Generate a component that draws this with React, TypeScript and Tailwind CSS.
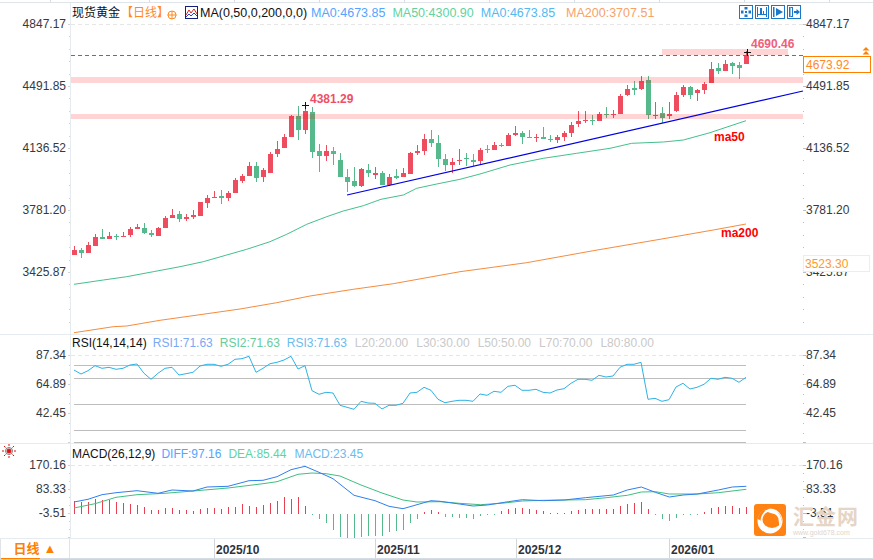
const FONT = "font-['Liberation_Sans','Noto_Sans_CJK_SC',sans-serif]";

const UP = "#ee4d5f";
const DOWN = "#55b98c";

type Candle = [number, number, number, number, number]; // up=1, wickTop, bodyTop, bodyBottom, wickBottom

// values read off the chart in 3x px, base is added afterwards
const group1: Candle[] = [
  [1, 468, 480, 495, 495], [0, 475, 481, 488, 503], [1, 457, 465, 489, 489], [1, 433, 441, 468, 468],
  [0, 418, 441, 446, 446], [1, 427, 437, 446, 447], [0, 433, 437, 439, 449], [1, 427, 438, 440, 441],
  [1, 412, 418, 435, 441], [1, 403, 411, 416, 417], [0, 400, 414, 429, 432], [0, 421, 430, 434, 440],
  [1, 411, 414, 438, 438], [1, 378, 384, 414, 414], [1, 357, 375, 384, 384], [0, 364, 373, 387, 395],
  [1, 372, 381, 386, 393], [1, 361, 375, 381, 386], [1, 335, 336, 378, 378], [1, 316, 324, 339, 354],
  [1, 303, 321, 324, 324], [0, 300, 318, 324, 342], [1, 303, 309, 324, 333], [1, 265, 270, 309, 309],
  [1, 252, 258, 273, 279], [1, 216, 228, 258, 258], [0, 216, 228, 264, 276], [1, 234, 240, 261, 276],
  [1, 186, 192, 249, 249], [1, 153, 177, 192, 201], [1, 132, 141, 174, 174], [1, 75, 78, 141, 141],
  [0, 48, 78, 120, 150], [1, 48, 63, 120, 132], [0, 51, 66, 186, 204], [0, 162, 183, 198, 246],
  [1, 165, 183, 198, 213], [0, 171, 183, 192, 225], [0, 189, 210, 261, 261], [0, 237, 261, 276, 306],
  [0, 231, 273, 288, 291],
];
const group2: Candle[] = [
  [1, 295, 297, 348, 350], [0, 282, 300, 309, 320], [1, 292, 309, 315, 327], [0, 303, 309, 345, 345],
  [1, 312, 321, 345, 348], [0, 297, 318, 324, 327], [1, 295, 309, 321, 321], [1, 246, 249, 312, 312],
  [1, 225, 243, 249, 255], [1, 192, 207, 243, 255], [0, 180, 207, 219, 231], [0, 195, 219, 267, 291],
  [0, 252, 267, 285, 303], [1, 265, 276, 285, 309], [1, 237, 270, 273, 285], [0, 250, 265, 268, 288],
  [0, 252, 270, 275, 288], [1, 234, 240, 273, 285], [0, 225, 238, 241, 248], [1, 216, 225, 240, 240],
  [0, 219, 224, 227, 231], [1, 189, 195, 228, 228], [1, 168, 189, 195, 198], [0, 183, 189, 201, 222],
  [0, 180, 201, 203, 204], [1, 192, 201, 204, 215], [0, 171, 201, 207, 207], [0, 195, 207, 210, 216],
  [1, 195, 201, 210, 219], [1, 183, 189, 201, 213], [1, 156, 165, 189, 201], [1, 123, 153, 162, 171],
  [1, 123, 150, 153, 159], [0, 135, 150, 153, 165], [1, 126, 132, 153, 153], [0, 111, 132, 135, 144],
  [1, 120, 132, 134, 144], [1, 72, 78, 132, 132], [1, 45, 57, 75, 78],
];
const group3: Candle[] = [
  [0, 124, 145, 149, 165], [1, 108, 123, 148, 151], [0, 108, 120, 225, 236], [1, 186, 224, 228, 236],
  [0, 200, 219, 234, 250], [1, 186, 222, 228, 236], [1, 156, 165, 213, 216], [1, 135, 141, 165, 171],
  [0, 138, 141, 165, 177], [1, 147, 150, 159, 183], [1, 126, 132, 150, 162], [1, 66, 87, 129, 129],
  [0, 69, 84, 93, 102], [1, 60, 72, 93, 93], [0, 66, 69, 78, 102], [0, 66, 75, 84, 117], [1, 33, 45, 72, 72],
];
const candles: Candle[] = [
  ...group1.map((c) => [c[0], c[1] / 3 + 90, c[2] / 3 + 90, c[3] / 3 + 90, c[4] / 3 + 90] as Candle),
  ...group2.map((c) => [c[0], c[1] / 3 + 70, c[2] / 3 + 70, c[3] / 3 + 70, c[4] / 3 + 70] as Candle),
  ...group3.map((c) => [c[0], c[1] / 3 + 40, c[2] / 3 + 40, c[3] / 3 + 40, c[4] / 3 + 40] as Candle),
];

const pts = (list: number[][], ox: number, oy: number) =>
  list.map(([x, y]) => `${(ox + x / 3).toFixed(1)},${(oy + y / 3).toFixed(1)}`).join(" ");

const ma50 = [
  pts([[42, 253], [130, 240], [200, 230], [280, 215], [360, 200], [430, 185], [500, 165], [560, 148], [630, 125], [680, 103], [740, 73], [800, 50], [850, 33], [910, 17]], 60, 200),
  pts([[153, 388], [220, 375], [260, 355], [320, 342]], 330, 70),
  pts([[0, 178], [60, 162], [150, 135], [250, 115], [350, 100], [450, 85], [515, 70], [610, 66], [670, 60], [750, 38], [810, 18], [858, 2]], 460, 120),
].join(" ");

const ma200 = [
  pts([[42, 398], [160, 380], [200, 378], [300, 361], [420, 344], [540, 327], [650, 308], [750, 288], [880, 268], [1000, 251]], 60, 200),
  pts([[0, 455], [200, 428], [400, 392], [600, 358], [760, 330], [858, 312]], 460, 120),
].join(" ");

const rsiValues = [
  120, 132, 122, 107, 115, 112, 118, 115, 105, 102, 130, 148, 130, 115, 112, 135, 131, 127, 108, 103, 103, 109, 103, 88, 86, 79,
  127, 115, 101, 97, 90, 79, 117, 107, 182, 193, 187, 189, 226, 232, 238, 214, 219, 220, 237, 226, 226, 220, 189, 187, 172, 181, 208,
  218, 214, 211, 211, 214, 192, 196, 184, 187, 169, 166, 181, 181, 178, 187, 189, 180, 176, 160, 148, 148, 151, 136, 141, 138, 112,
  103, 103, 97, 208, 205, 214, 209, 171, 160, 177, 172, 163, 145, 148, 142, 145, 157, 142,
];
const rsiLine = rsiValues.map((v, i) => `${74 + i * 7},${(330 + v / 3).toFixed(1)}`).join(" ");

const diffLine = [
  pts([[222, 516], [264, 508], [306, 494], [348, 488], [411, 482], [474, 490], [516, 480], [579, 483], [621, 471], [684, 469], [747, 452], [789, 451], [831, 440], [873, 419], [915, 409], [957, 427], [999, 446], [1062, 496], [1125, 512], [1167, 529], [1209, 536], [1251, 524], [1293, 512]], 0, 330),
  pts([[0, 514], [58, 522], [100, 528], [142, 525], [205, 515], [247, 509], [310, 512], [373, 510], [436, 503], [520, 495], [562, 480], [604, 471], [646, 487], [688, 501], [730, 495], [772, 492], [835, 480], [877, 471], [919, 469]], 440, 330),
].join(" ");

const deaLine = [
  pts([[222, 534], [285, 521], [348, 502], [411, 494], [495, 490], [579, 483], [684, 474], [789, 461], [831, 455], [894, 433], [936, 429], [978, 431], [1020, 438], [1083, 465], [1146, 489], [1209, 510], [1251, 516]], 0, 330),
  pts([[0, 515], [58, 520], [121, 524], [184, 520], [247, 513], [310, 511], [436, 509], [499, 503], [562, 496], [604, 486], [646, 485], [688, 492], [772, 492], [835, 488], [919, 478]], 440, 330),
].join(" ");

const macdBars = [
  513, 515, 517, 507, 510, 511, 515, 519, 523, 525, 531, 540, 539, 535, 533, 540, 541, 544, 538, 534, 534, 536, 532, 530, 522, 528, 530, 524, 519, 513, 501, 506, 501, 527,
  554, 567, 579, 600, 621, 624, 624, 622, 617, 618, 617, 607, 604, 600, 578, 567, 547, 541, 546,
  560, 560, 564, 564, 566, 558, 555, 552, 544, 536, 533, 534, 538, 540, 544, 549, 549, 549, 543, 539, 538, 537, 538, 538, 537, 527, 521, 519, 516, 536,
  555, 568, 572, 564, 555, 553, 552, 547, 533, 530, 529, 529, 533, 531,
];

function AxisTicks({ top, bottom, step, first, every }: { top: number; bottom: number; step: number; first: number; every: number }) {
  const ys: number[] = [];
  for (let y = first; y < bottom; y += step) ys.push(y);
  return (
    <g shapeRendering="crispEdges">
      <rect x={70} y={top} width={1} height={bottom - top} fill="#e6ebf0" />
      {ys.map((y, i) => {
        const major = i % every === 0;
        return (
          <g key={y}>
            <rect x={major ? 67 : 69} y={Math.round(y)} width={major ? 3 : 1} height={1} fill="#ccd4dc" />
            <rect x={803} y={Math.round(y)} width={major ? 3 : 1} height={1} fill="#b9c0c7" />
          </g>
        );
      })}
    </g>
  );
}

function MainChart() {
  return (
    <svg viewBox="68 3 738 331" className="absolute inset-0 h-full w-full">
      <AxisTicks top={3} bottom={334} step={12.4} first={24} every={5} />
      <line x1={71} y1={24.5} x2={803} y2={24.5} stroke="#e6e6e6" strokeDasharray="4 3" />
      <polyline points={ma200} fill="none" stroke="#f58c3e" strokeWidth={1} />
      <polyline points={ma50} fill="none" stroke="#45c08c" strokeWidth={1} />
      <g shapeRendering="crispEdges">
        {candles.map((c, i) => (
          <g key={i} fill={c[0] ? UP : DOWN}>
            <rect x={74 + i * 7} y={c[1]} width={1} height={c[4] - c[1]} />
            <rect x={72 + i * 7} y={c[2]} width={5} height={Math.max(c[3] - c[2], 1)} />
          </g>
        ))}
      </g>
      <g fill="#ff0000" fillOpacity={0.17} shapeRendering="crispEdges">
        <rect x={71} y={77} width={732} height={6} />
        <rect x={71} y={114} width={732} height={5} />
        <rect x={662} y={49} width={126} height={6} />
      </g>
      <line x1={71} y1={55.5} x2={803} y2={55.5} stroke="#1e82e6" strokeDasharray="4 3" />
      <line x1={347} y1={195} x2={803} y2={91} stroke="#0000e0" strokeWidth={1.2} />
      <g stroke="#111" shapeRendering="crispEdges">
        <path d="M302 105.5h7M305.5 102v7" />
        <path d="M744 52.5h7M747.5 49v7" />
      </g>
    </svg>
  );
}

function RsiChart() {
  return (
    <svg viewBox="68 335 738 108" className="absolute inset-0 h-full w-full">
      <AxisTicks top={335} bottom={443} step={9.7} first={355} every={3} />
      <line x1={71} y1={355.5} x2={803} y2={355.5} stroke="#e6e6e6" strokeDasharray="4 3" />
      <g fill="#bdbdbd" shapeRendering="crispEdges">
        <rect x={74} y={365} width={672} height={1} />
        <rect x={74} y={378} width={672} height={1} />
        <rect x={74} y={404} width={672} height={1} />
        <rect x={74} y={430} width={672} height={1} />
        <rect x={74} y={442} width={672} height={1} />
      </g>
      <polyline points={rsiLine} fill="none" stroke="#2cb3e6" strokeWidth={1} />
    </svg>
  );
}

function MacdChart() {
  return (
    <svg viewBox="68 444 738 94" className="absolute inset-0 h-full w-full">
      <AxisTicks top={444} bottom={538} step={8} first={465} every={3} />
      <line x1={71} y1={465.5} x2={803} y2={465.5} stroke="#e6e6e6" strokeDasharray="4 3" />
      <g shapeRendering="crispEdges">
        {macdBars.map((v, i) => {
          const up = v < 551;
          const y = 330 + v / 3;
          return <rect key={i} x={74 + i * 7} y={up ? y : 514} width={1} height={Math.max(Math.abs(y - 514), 1)} fill={up ? "#e8404f" : DOWN} />;
        })}
      </g>
      <polyline points={deaLine} fill="none" stroke="#3fbf80" strokeWidth={1} />
      <polyline points={diffLine} fill="none" stroke="#2f80ed" strokeWidth={1} />
    </svg>
  );
}

function ToolButton({ children }: { children: React.ReactNode }) {
  return (
    <div className="h-[14px] w-[14px] border border-[#1b78c8] bg-white">
      <svg viewBox="0 0 12 12" className="h-[12px] w-[12px]" fill="#1b78c8">
        {children}
      </svg>
    </div>
  );
}

function Toolbar() {
  return (
    <div className="absolute left-[671px] top-[2px] flex gap-[2px]">
      <ToolButton>
        <rect x="4.500" y="1" width="3" height="2.500" />
        <rect x="4.500" y="8.500" width="3" height="2.500" />
        <rect x="1" y="4.500" width="2.500" height="3" />
        <rect x="8.500" y="4.500" width="2.500" height="3" />
        <rect x="5" y="5" width="2" height="2" />
      </ToolButton>
      <ToolButton>
        <rect x="1" y="1" width="1" height="10" />
        <rect x="10" y="1" width="1" height="10" />
        <rect x="4" y="2" width="2" height="7" />
        <rect x="2" y="8" width="8" height="1" />
        <rect x="7" y="5" width="1" height="3" />
      </ToolButton>
      <ToolButton>
        <rect x="1" y="1" width="1.500" height="10" />
        <path d="M4 2l7 4-7 4z" />
      </ToolButton>
      <ToolButton>
        <rect x="1" y="1" width="1.500" height="10" />
        <rect x="2.500" y="1" width="2.500" height="1" />
        <rect x="2.500" y="10" width="2.500" height="1" />
        <rect x="4" y="1" width="1" height="10" />
        <path d="M6 5h2.500V3L12 6 8.500 9V7H6z" />
      </ToolButton>
    </div>
  );
}

function AxisLabels({ labels, gap, top, right }: { labels: string[]; gap: number; top: string; right?: boolean }) {
  return (
    <div className={`flex flex-col ${top} ${right ? "pl-0" : "pr-[2px] items-end"}`} style={{ gap }}>
      {labels.map((l) => (
        <span key={l} className="h-[14px] text-[12px] leading-[14px] text-[#333a44]">
          {l}
        </span>
      ))}
    </div>
  );
}

function Logo() {
  return (
    <div className="pointer-events-none absolute left-[754px] top-[504px] flex items-start gap-[7px]">
      <svg viewBox="0 0 32 32" className="h-[32px] w-[32px]">
        <rect width="32" height="32" rx="3" fill="#ff8213" />
        <circle cx="16" cy="17" r="12.500" fill="#fff" />
        <path d="M3.600 15C5 8 10 4 17 4c-6 2-10 6-10.500 13-.3-1-1.500-1.500-2.900-2z" fill="#ff8213" />
        <ellipse cx="18" cy="15.500" rx="9.500" ry="8.500" fill="#ff8213" />
        <path d="M10 7c6-3 15-1 17 7 .6 3 0 6-2 8 1-7-4-13-15-15z" fill="#fff" />
        <circle cx="18" cy="16" r="6.500" fill="#ff8213" />
      </svg>
      <div className="flex w-[66px] flex-col items-start">
        <span className="text-[21px] font-bold leading-[25px] tracking-[1px] text-[#e6d5c5]">汇金网</span>
        <span className="text-[7px] leading-[8px] text-[#e2d6ca]">www.gold678.com</span>
      </div>
    </div>
  );
}

export default function App() {
  return (
    <div className={`relative flex h-[559px] w-[874px] flex-col overflow-hidden border-r border-[#d5dce4] bg-white ${FONT}`}>
      {/* tab strip cut off at the top */}
      <div className="flex h-[3px] shrink-0 border-b border-[#dfe4e9]">
        <div className="w-[51px] border-r border-[#d5dce4]" />
        <div className="w-[99px] border-r border-[#d5dce4]" />
        <div className="w-[85px] border-r border-[#d5dce4]" />
        <div className="w-[85px] border-r border-[#d5dce4]" />
        <div className="w-[85px] border-r border-[#d5dce4]" />
        <div className="w-[85px] border-r border-[#d5dce4]" />
        <div className="w-[85px] border-r border-[#d5dce4]" />
        <div className="w-[85px] border-r border-[#d5dce4]" />
        <div className="w-[85px] border-r border-[#d5dce4]" />
        <div className="w-[85px] border-r border-[#d5dce4]" />
      </div>

      {/* price pane */}
      <div className="relative grid h-[332px] shrink-0 grid-cols-[68px_738px_1fr] border-b border-[#e6ebf0]">
        <AxisLabels labels={["4847.17", "4491.85", "4136.52", "3781.20", "3425.87"]} gap={48} top="pt-[14px]" />
        <div className="relative">
          <MainChart />
          <div className="relative flex h-[20px] items-center pl-[4px] text-[12px] leading-[14px]">
            <span className="text-[#111]">现货黄金</span>
            <span className="ml-[1px] text-[#ff8a1f]">【日线】</span>
            <svg viewBox="0 0 10 10" className="ml-[-2px] mt-[3px] h-[10px] w-[10px]" fill="none" stroke="#ff8a1f">
              <circle cx="5" cy="5" r="4" />
              <path d="M0.500 5h9M5 1v8" />
            </svg>
            <svg viewBox="0 0 13 13" className="ml-[8px] mb-[2px] h-[13px] w-[13px]" fill="none">
              <rect x="0.500" y="0.500" width="12" height="12" fill="#fff" stroke="#12207a" />
              <path d="M1 9l3-5 2 3 3-4 3 5" stroke="#e02020" />
              <path d="M1 11l3-3 2 2 3-3 3 3" stroke="#2040e0" />
            </svg>
            <span className="ml-[2px] text-[12.5px] text-[#111]">MA(0,50,0,200,0,0)</span>
            <span className="ml-[4px] text-[12.5px] text-[#55a4ff]">MA0:4673.85</span>
            <span className="ml-[7px] text-[12.5px] text-[#5fd3a0]">MA50:4300.90</span>
            <span className="ml-[7px] text-[12.5px] text-[#55b8f0]">MA0:4673.85</span>
            <span className="ml-[11px] text-[12.5px] text-[#f5a26b]">MA200:3707.51</span>
          </div>
          <Toolbar />
          <span className="absolute left-[242px] top-[89px] text-[12px] font-bold leading-[14px] text-[#ef4f66]">4381.29</span>
          <span className="absolute left-[683px] top-[34px] text-[12px] font-bold leading-[14px] text-[#f0607a]">4690.46</span>
          <span className="absolute left-[646px] top-[127px] text-[12px] font-bold leading-[14px] text-[#ff0000]">ma50</span>
          <span className="absolute left-[653px] top-[223px] text-[12px] font-bold leading-[14px] text-[#ff0000]">ma200</span>
        </div>
        <AxisLabels labels={["4847.17", "4491.85", "4136.52", "3781.20", "3425.87"]} gap={48} top="pt-[14px]" right />
        <div className="absolute left-[803px] top-[53px] flex h-[17px] w-[68px] items-center border border-[#ff8000] bg-white pl-[2px] text-[12px] text-[#ff8a1f]">
          4673.92
        </div>
        <svg viewBox="0 0 8 8" className="absolute left-[862px] top-[44px] h-[8px] w-[8px]" fill="#ff8000">
          <path d="M4 0l3.500 3.500h-7zM4 4l3.500 3.500h-7z" />
        </svg>
        <div className="absolute left-[803px] top-[252px] flex h-[17px] w-[67px] items-center border border-[#e8eef3] bg-white pl-[1px] text-[12px] text-[#ff9a1e]">
          3523.30
        </div>
      </div>

      {/* rsi pane */}
      <div className="relative grid h-[109px] shrink-0 grid-cols-[68px_738px_1fr] border-b border-[#e6ebf0]">
        <AxisLabels labels={["87.34", "64.89", "42.45"]} gap={15} top="pt-[13px]" />
        <div className="relative">
          <RsiChart />
          <div className="relative flex h-[16px] items-center gap-[7px] pl-[4px] text-[12px] leading-[14px]">
            <span className="mr-[-1px] text-[#111]">RSI(14,14,14)</span>
            <span className="text-[#7ba8f5]">RSI1:71.63</span>
            <span className="text-[#66cc99]">RSI2:71.63</span>
            <span className="mr-[1px] text-[#6bbbee]">RSI3:71.63</span>
            <span className="mr-[1px] text-[#c9c9c9]">L20:20.00</span>
            <span className="mr-[1px] text-[#c9c9c9]">L30:30.00</span>
            <span className="mr-[1px] text-[#c9c9c9]">L50:50.00</span>
            <span className="mr-[1px] text-[#c9c9c9]">L70:70.00</span>
            <span className="text-[#c9c9c9]">L80:80.00</span>
          </div>
        </div>
        <AxisLabels labels={["87.34", "64.89", "42.45"]} gap={15} top="pt-[13px]" right />
      </div>

      {/* macd pane */}
      <div className="relative grid h-[95px] shrink-0 grid-cols-[68px_738px_1fr] border-b border-[#e6ebf0]">
        <div className="relative">
          <AxisLabels labels={["170.16", "83.33", "-3.51"]} gap={10} top="pt-[14px]" />
          <svg viewBox="0 0 14 14" className="absolute left-[2px] top-0 h-[14px] w-[14px]" stroke="#e01010" strokeWidth="1">
            <circle cx="7" cy="7" r="2" fill="#e01010" />
            <circle cx="7" cy="7" r="3.500" fill="none" stroke="#222" strokeWidth="0.600" />
            <path d="M7 0v2M7 12v2M0 7h2M12 7h2M2 2l1.500 1.500M10.500 10.500L12 12M12 2l-1.500 1.500M3.500 10.500L2 12" />
          </svg>
        </div>
        <div className="relative">
          <MacdChart />
          <div className="relative flex h-[19px] items-center gap-[8px] pl-[4px] text-[12px] leading-[14px]">
            <span className="mr-[-2px] text-[#111]">MACD(26,12,9)</span>
            <span className="mr-[-1px] text-[#55a4ff]">DIFF:97.16</span>
            <span className="text-[#5fd3a0]">DEA:85.44</span>
            <span className="text-[#6bbbee]">MACD:23.45</span>
          </div>
        </div>
        <AxisLabels labels={["170.16", "83.33", "-3.51"]} gap={10} top="pt-[14px]" right />
      </div>

      {/* date axis */}
      <div className="flex h-[20px] shrink-0 border-b border-[#d5dce4]">
        <div className="relative flex w-[70px] items-center justify-center gap-[4px] border-x border-[#dfe4e9] text-[13px] font-bold text-[#ff7f00]">
          <span>日线</span>
          <span className="text-[13px] leading-[14px]">▲</span>
          <div className="absolute bottom-[-1px] left-0 h-[1px] w-[39px] bg-[#ff7f00]" />
        </div>
        <div className="flex pl-[144px] text-[12px] font-bold leading-[14px] text-[#2f333a]">
          <span className="w-[161px] border-l border-[#cfd6dd] pl-[1px] pt-[4px]">2025/10</span>
          <span className="w-[141px] border-l border-[#cfd6dd] pl-[1px] pt-[4px]">2025/11</span>
          <span className="w-[153px] border-l border-[#cfd6dd] pl-[1px] pt-[4px]">2025/12</span>
          <span className="w-[100px] border-l border-[#cfd6dd] pl-[1px] pt-[4px]">2026/01</span>
        </div>
      </div>

      <Logo />
    </div>
  );
}
